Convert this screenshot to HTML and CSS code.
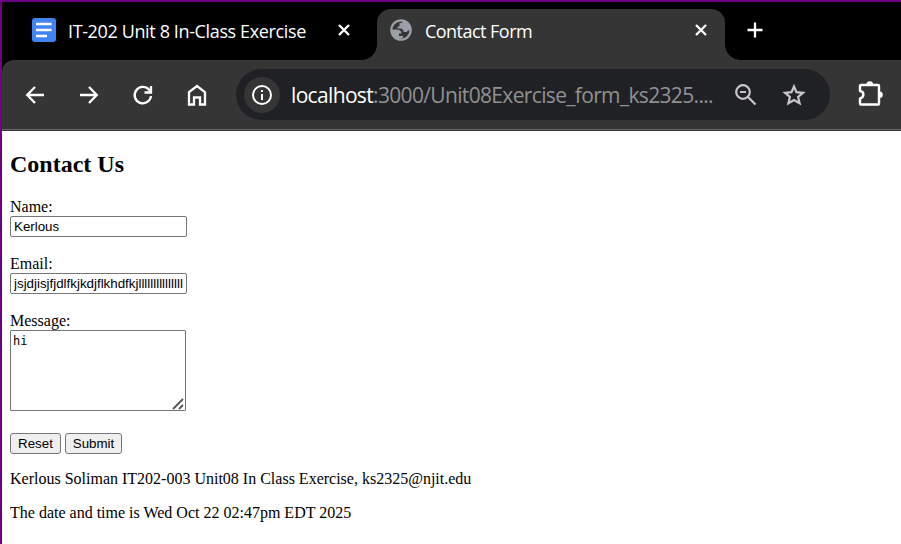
FILE: index.html
```html
<!DOCTYPE html>
<html lang="en">
<head>
<meta charset="utf-8">
<title>Contact Form</title>
<link rel="stylesheet" href="styles.css">
</head>
<body>
<div class="window">
  <header class="tabs">
    <div class="tab tab-docs">
      <svg class="docs-icon" width="24" height="24" viewBox="0 0 24 24"><rect width="24" height="24" rx="3" fill="#4285f4"/><path d="M4 6H19.500M4 12H19.500M4 18H15" stroke="#fff" stroke-width="2.600"/></svg>
      <span class="tab-title title-docs">IT-202 Unit 8 In-Class Exercise</span>
      <svg class="close" width="12" height="12" viewBox="0 0 12 12"><path d="M1 1L11 11M11 1L1 11"/></svg>
    </div>
    <div class="tab tab-active">
      <svg class="globe" width="22" height="22" viewBox="0 0 22 22"><circle cx="11" cy="11" r="9.700" fill="#353535" stroke="#9aa0a6" stroke-width="2.200"/><path d="M12.500 1.500L12 4H9.500V7.500H7.500V9.500H11.500L13.500 11.500V13H16.500L18 11.500H20.500A10 10 0 0 0 12.500 1.500ZM1.500 10.500H6.500C9.500 10.500 11.500 12 11.500 14.500H9V17H13V18.500L9 20.500A10 10 0 0 1 1.500 10.500Z" fill="#9aa0a6"/></svg>
      <span class="tab-title title-form">Contact Form</span>
      <svg class="close" width="12" height="12" viewBox="0 0 12 12"><path d="M1 1L11 11M11 1L1 11"/></svg>
    </div>
    <svg class="plus" width="16" height="16" viewBox="0 0 16 16"><path d="M8 .5V15.500M.5 8H15.500" stroke="#fff" stroke-width="2.300"/></svg>
  </header>
  <div class="toolbar">
    <nav class="nav">
      <svg width="22" height="22" viewBox="0 0 22 22"><path d="M20 11H4M11 3L3.200 11L11 19"/></svg>
      <svg width="22" height="22" viewBox="0 0 22 22"><path d="M2 11H18M11 3L18.800 11L11 19"/></svg>
      <svg width="22" height="22" viewBox="0 0 22 22"><path d="M19 12A8.200 8.200 0 1 1 17 5.700L18.500 8M19 2V8.500H12.500"/></svg>
      <svg width="22" height="22" viewBox="0 0 22 22"><path d="M3 8.200L11 2L19 8.200V20.500H14V13.500H8V20.500H3Z"/></svg>
    </nav>
    <div class="address">
      <span class="info"><svg width="20" height="20" viewBox="0 0 20 20"><circle cx="10" cy="10" r="9" fill="none" stroke="#fff" stroke-width="2"/><path d="M10 9V15M10 5V7" stroke="#fff" stroke-width="2"/></svg></span>
      <span class="url"><span class="host">localhost</span>:3000/Unit08Exercise_form_ks2325....</span>
      <svg class="zoom" width="22" height="22" viewBox="0 0 22 22"><circle cx="8" cy="8" r="6.800"/><path d="M13 13L20.500 20.500M5 8H11"/></svg>
      <svg class="star" width="24" height="24" viewBox="0 0 24 24"><path d="M12 3.500L14.500 9.200L21 9.800L16.100 14L17.600 20.300L12 17L6.400 20.300L7.900 14L3 9.800L9.500 9.200Z"/></svg>
    </div>
    <svg class="puzzle" width="26" height="26" viewBox="0 0 26 26"><path d="M2 6Q2 5 3 5H20Q21 5 21 6V23.500Q21 24.500 20 24.500H3Q2 24.500 2 23.500V18.500C6.500 17.500 6.500 11.500 2 11Z" fill="none" stroke="#fff" stroke-width="2.400" stroke-linejoin="round"/><path d="M8.500 4.500A3.200 3.200 0 0 1 15 4.500ZM21.500 11.500A3.200 3.200 0 0 1 21.500 18Z" fill="#fff"/></svg>
  </div>
  <main>
    <h2>Contact Us</h2>
    <form>
      <label for="name">Name:</label><br>
      <input type="text" id="name" value="Kerlous"><br><br>
      <label for="email">Email:</label><br>
      <input type="text" id="email" value="jsjdjisjfjdlfkjkdjflkhdfkjllllllllllllllllllll"><br><br>
      <label for="message">Message:</label><br>
      <span class="message-box"><textarea id="message" spellcheck="false">hi</textarea><svg class="grip" width="12" height="12" viewBox="0 0 12 12"><path d="M1 11L11 1M7 11L11 7"/></svg></span><br><br>
      <button type="reset" class="reset">Reset</button><button type="submit" class="submit">Submit</button>
    </form>
    <p>Kerlous Soliman IT202-003 Unit08 In Class Exercise, ks2325@njit.edu</p>
    <p>The date and time is Wed Oct 22 02:47pm EDT 2025</p>
  </main>
</div>
</body>
</html>
```

FILE: styles.css
```css
* { box-sizing: border-box; }
body { margin: 0; background: #fff; overflow: hidden; }
svg { display: block; flex: none; }
.window {
  height: 544px;
  border-top: 2px solid #6b0080;
  border-left: 2px solid #6b0080;
}
.tabs { display: flex; height: 58px; background: #000; }
.tab { display: flex; align-items: center; }
.tab-docs { width: 375px; padding: 0 27px 2px 30px; }
.tab-title {
  margin-left: 12px;
  color: #fff;
  font: 18px/24px "Open Sans", "Noto Sans", sans-serif;
  white-space: nowrap;
  padding-top: 2px;
}
.title-docs { letter-spacing: -0.37px; }
.title-form { margin-left: 13px; letter-spacing: -0.53px; }
.close { margin-left: auto; fill: none; stroke: #fff; stroke-width: 2.3; }
.tab-active {
  position: relative;
  width: 348px;
  height: 51px;
  margin-top: 7px;
  padding: 0 18px 9px 13px;
  border-radius: 14px 14px 0 0;
  background: #353535;
}
.tab-active::before, .tab-active::after {
  content: "";
  position: absolute;
  bottom: 0;
  width: 15px;
  height: 15px;
}
.tab-active::before { left: -15px; background: radial-gradient(circle at 0 0, transparent 14.5px, #353535 15px); }
.tab-active::after { right: -15px; background: radial-gradient(circle at 100% 0, transparent 14.5px, #353535 15px); }
.plus { margin: 20px 0 0 22px; }
.toolbar {
  display: flex;
  align-items: flex-start;
  height: 71px;
  padding-top: 9px;
  border-bottom: 1px solid #353535;
  box-shadow: inset 0 -1px #666;
  border-radius: 12px 0 0 0;
  background: #353535;
  position: relative;
}
.toolbar::before {
  content: "";
  position: absolute;
  inset: 0 auto auto 0;
  z-index: -1;
  width: 12px;
  height: 12px;
  background: #000;
}
.nav { display: flex; gap: 32px; width: 234px; padding: 15px 0 0 22px; fill: none; stroke: #fff; stroke-width: 2.3; }
.address {
  display: flex;
  align-items: center;
  width: 594px;
  height: 51px;
  padding-left: 8px;
  border-radius: 26px;
  background: #202124;
}
.info { display: grid; place-items: center; width: 36px; height: 36px; border-radius: 50%; background: #353535; }
.url {
  width: 443px;
  margin-left: 11px;
  color: #919191;
  font: 21px/30px "Open Sans", "Noto Sans", sans-serif;
  letter-spacing: -0.66px;
  white-space: nowrap;
}
.host { color: #fff; }
.zoom, .star { fill: none; stroke: #c7c7c7; stroke-width: 2.2; }
.zoom { margin-left: 1px; }
.star { margin-left: 25px; }
.puzzle { margin: 11px 0 0 28px; }
main { padding: 0 8px; color: #000; font: 16px/18px "Liberation Serif", "Times New Roman", serif; display: flow-root; }
h2 { margin: 20px 0; font-size: 24px; line-height: 27px; }
p { margin: 16px 0; }
input, button { font: 13.333px "Liberation Sans", Arial, sans-serif; color: #000; }
input { width: 177px; height: 21px; padding: 1px 3px; border: 1px solid #767676; border-radius: 2px; vertical-align: top; }
.message-box { display: inline-block; position: relative; vertical-align: top; }
textarea {
  display: block;
  width: 176px;
  height: 81px;
  padding: 3px 2px 2px;
  border: 1px solid #767676;
  border-radius: 1px;
  font: 12px/15px "DejaVu Sans Mono", monospace;
  resize: none;
}
.grip { position: absolute; right: 2px; bottom: 1px; fill: none; stroke: #555; stroke-width: 1.8; pointer-events: none; }
form { height: 256px; }
button { height: 21px; padding: 0; border: 1px solid #767676; border-radius: 3px; background: #efefef; vertical-align: top; margin-top: 4px; }
.reset { width: 51px; margin-right: 4px; }
.submit { width: 57px; }
```
